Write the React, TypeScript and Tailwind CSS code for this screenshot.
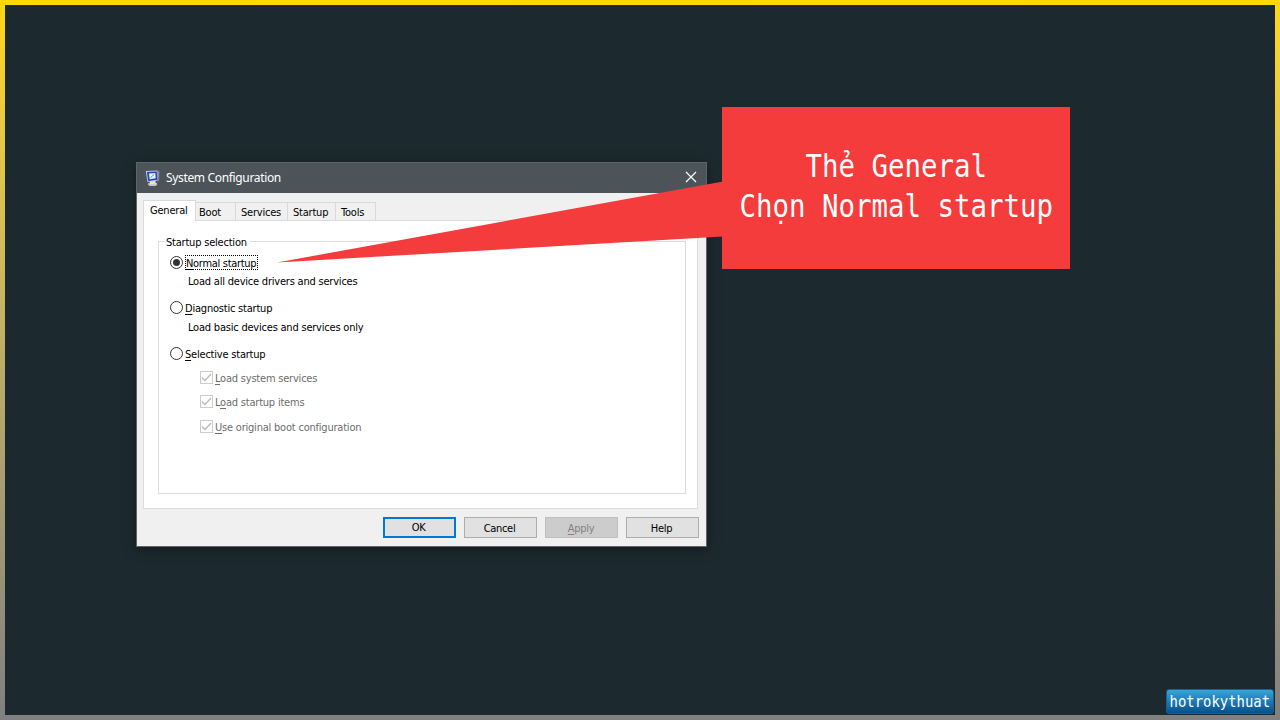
import type { ReactNode } from "react";

function Row({ top, indent, children }: { top: string; indent: string; children: ReactNode }) {
  return <div className={`flex h-[15px] items-center ${top} ${indent}`}>{children}</div>;
}

function Radio({ checked }: { checked?: boolean }) {
  return (
    <span className="flex size-[13px] shrink-0 items-center justify-center rounded-full border border-[#333] bg-white">
      {checked && <span className="size-[7px] rounded-full bg-[#333]" />}
    </span>
  );
}

function Check() {
  return (
    <span className="flex size-[13px] shrink-0 items-center justify-center border border-[#ccc] bg-white">
      <svg width="11" height="11" viewBox="0 0 11 11" fill="none" stroke="#bbb" strokeWidth="1.3">
        <path d="M1 5.5 4 8.5 10 2" />
      </svg>
    </span>
  );
}

function Key({ children }: { children: ReactNode }) {
  return <span className="underline decoration-1 underline-offset-2">{children}</span>;
}

function ConfigIcon() {
  return (
    <svg className="shrink-0" width="16" height="17" viewBox="0 0 16 17">
      <ellipse cx="7.6" cy="14.2" rx="4.6" ry="1.9" fill="#c4c6c4" />
      <path d="M5 11h5.5v3.2H5z" fill="#e4e4e0" />
      <path d="M.8 1 12.6.4l.7 10.2L2.4 12z" fill="#c3c6dc" />
      <path d="M12.6.4 14.6 1.8 14 11l-1.8.4z" fill="#85878f" />
      <path d="M2 2 11.8 1.5l.5 8.3-9.2 1.2z" fill="#2544cc" />
      <path d="M4 3.6 10.3 3l.4 5.2-6 1z" fill="#e6f4ff" />
      <path d="m5.5 7.8 3.7-3.6" stroke="#2d9ad0" strokeWidth="1" />
    </svg>
  );
}

const tabs = [
  { name: "Boot", box: "w-[41px] pl-[3px]" },
  { name: "Services", box: "w-[53px] pl-[5px]" },
  { name: "Startup", box: "w-[49px] pl-[5px]" },
  { name: "Tools", box: "w-[41px] pl-[5px]" },
];

function Dialog() {
  return (
    <section className="flex h-[385px] w-[571px] flex-col border border-[#5b656b] bg-[#f0f0f0] font-['DejaVu_Sans_Condensed','DejaVu_Sans',sans-serif] text-[11px] leading-[15px] tracking-[-0.21px] whitespace-nowrap text-black shadow-[0_3px_12px_rgba(0,0,0,0.4)]">
      <header className="flex h-[30px] shrink-0 items-center bg-[#4c545a] pr-[9px] pl-[8px] font-['Noto_Sans',sans-serif] text-[12px] tracking-[-0.34px] text-white">
        <ConfigIcon />
        <h1 className="ml-[5px] flex-1 pb-[2px]">System Configuration</h1>
        <svg className="mb-[2px]" width="12" height="12" viewBox="0 0 12 12" stroke="#fff" strokeWidth="1.2">
          <path d="m1 1 10 10M11 1 1 11" />
        </svg>
      </header>
      <nav className="z-10 flex h-[28px] shrink-0 items-end pl-[6px]">
        <div className="h-[21px] w-[53px] border border-b-0 border-[#dadada] bg-white pt-[2px] pl-[6px]">General</div>
        {tabs.map((t) => (
          <div key={t.name} className={`-ml-px mb-px h-[18px] border border-b-0 border-[#d9d9d9] pt-[2px] ${t.box}`}>
            {t.name}
          </div>
        ))}
      </nav>
      <main className="-mt-px ml-[6px] h-[289px] w-[555px] shrink-0 border border-[#dcdcdc] bg-white pt-[20px] pl-[14px]">
        <div className="h-[253px] w-[528px] border border-[#dcdcdc] pl-[11px]">
          <div className="-mt-[7px] -ml-[6px] w-fit bg-white pr-[3px] pl-[2px]">Startup selection</div>
          <Row top="mt-[5px]" indent="ml-0">
            <Radio checked />
            <span className="ml-[2px] flex h-[15px] w-[73px] items-center border border-dotted border-black">
              <span className="pt-[2px] tracking-[-0.3px]"><Key>N</Key>ormal startup</span>
            </span>
          </Row>
          <Row top="mt-[4px]" indent="ml-[18px]">Load all device drivers and services</Row>
          <Row top="mt-[11px]" indent="ml-0">
            <Radio />
            <span className="ml-[2px] pt-[2px]"><Key>D</Key>iagnostic startup</span>
          </Row>
          <Row top="mt-[5px]" indent="ml-[18px]">Load basic devices and services only</Row>
          <Row top="mt-[11px]" indent="ml-0">
            <Radio />
            <span className="ml-[2px] pt-[2px]"><Key>S</Key>elective startup</span>
          </Row>
          <div className="text-[#6d6d6d]">
            <Row top="mt-[9px]" indent="ml-[30px]">
              <Check />
              <span className="ml-[2px] pt-[2px]"><Key>L</Key>oad system services</span>
            </Row>
            <Row top="mt-[9px]" indent="ml-[30px]">
              <Check />
              <span className="ml-[2px] pt-[2px]">L<Key>o</Key>ad startup items</span>
            </Row>
            <Row top="mt-[10px]" indent="ml-[30px]">
              <Check />
              <span className="ml-[2px] pt-[2px]"><Key>U</Key>se original boot configuration</span>
            </Row>
          </div>
        </div>
      </main>
      <footer className="mt-[8px] flex justify-end gap-[8px] pr-[7px] tracking-[-0.3px]">
        <button className="h-[21px] w-[73px] border-2 border-[#0078d7] bg-[#e1e1e1] pr-[2px] leading-[18px]">OK</button>
        <button className="h-[21px] w-[73px] border border-[#adadad] bg-[#e1e1e1] pt-px pr-[2px] leading-[19px]">Cancel</button>
        <button className="h-[21px] w-[73px] border border-[#bfbfbf] bg-[#ccc] pt-px pr-px leading-[19px] text-[#838383]"><Key>A</Key>pply</button>
        <button className="h-[21px] w-[73px] border border-[#adadad] bg-[#e1e1e1] pt-px pr-[2px] leading-[19px]">Help</button>
      </footer>
    </section>
  );
}

export default function App() {
  return (
    <div className="relative h-[720px] w-[1280px] overflow-hidden bg-linear-to-b from-[#ffd900] to-[#808080] p-[5px]">
      <div className="h-[710px] w-[1270px] bg-[#1c2a2f] pt-[157px] pl-[131px]">
        <Dialog />
      </div>
      <svg className="absolute top-[180px] left-[277px]" width="446" height="84" viewBox="0 0 446 84">
        <path d="M0 82.5 446 1.5V56.5z" fill="#f33c3b" />
      </svg>
      <div className="absolute top-[107px] left-[722px] flex h-[162px] w-[348px] items-center justify-center bg-[#f33c3b] pb-[4px]">
        <p className="shrink-0 scale-x-[0.87] text-center font-['DejaVu_Sans_Mono',monospace] text-[31.5px] leading-[40px] whitespace-nowrap text-white">
          Thẻ General
          <br />
          Chọn Normal startup
        </p>
      </div>
      <div className="absolute top-[689px] left-[1166px] flex h-[25px] w-[108px] items-center justify-center rounded-[3px] border border-[#17608f] bg-linear-to-b from-[#38a5d8] to-[#07508c]">
        <span className="scale-x-[0.87] font-['DejaVu_Sans_Mono',monospace] text-[16px] leading-[20px] text-white">hotrokythuat</span>
      </div>
    </div>
  );
}
